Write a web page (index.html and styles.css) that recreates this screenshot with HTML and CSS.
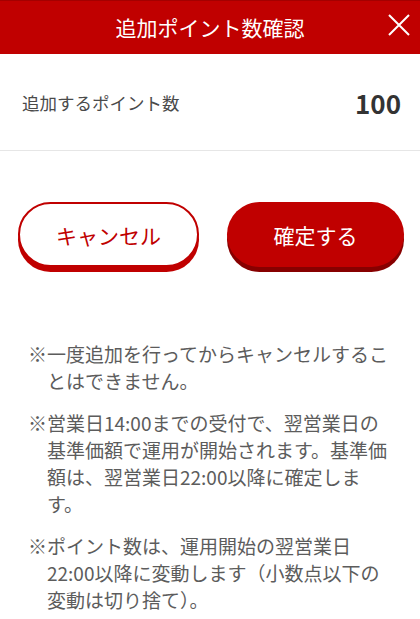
FILE: index.html
```html
<!DOCTYPE html>
<html lang="ja">
<head>
    <meta charset="UTF-8">
    <meta name="viewport" content="width=device-width, initial-scale=1.0">
    <title>追加ポイント数確認</title>
    <link rel="stylesheet" href="styles.css">
</head>
<body>
    <header class="header">
        <h1 class="header-title">追加ポイント数確認</h1>
        <button class="close-btn" aria-label="閉じる">
            <svg width="22" height="22" viewBox="0 0 22 22">
                <path d="M1 1 L21 21 M21 1 L1 21" stroke="#fff" stroke-width="2" fill="none"/>
            </svg>
        </button>
    </header>

    <div class="point-row">
        <span class="point-label">追加するポイント数</span>
        <span class="point-value">100</span>
    </div>

    <div class="actions">
        <button class="btn btn-cancel">キャンセル</button>
        <button class="btn btn-confirm">確定する</button>
    </div>

    <div class="notes">
        <p>※一度追加を行ってからキャンセルすることはできません。</p>
        <p>※営業日14:00までの受付で、翌営業日の基準価額で運用が開始されます。基準価額は、翌営業日22:00以降に確定します。</p>
        <p>※ポイント数は、運用開始の翌営業日22:00以降に変動します（小数点以下の変動は切り捨て）。</p>
    </div>
</body>
</html>
```

FILE: styles.css
```css
body {
    margin: 0;
    font-family: "Noto Sans CJK JP", "Noto Sans", sans-serif;
    background-color: #fff;
    color: #333;
}
.header {
    position: relative;
    height: 54px;
    background-color: #c00000;
    border-top: 1px solid #a30000;
    box-sizing: border-box;
    display: flex;
    align-items: center;
    justify-content: center;
}
.header-title {
    margin: 0;
    font-size: 21px;
    font-weight: normal;
    color: #fff;
    line-height: 1;
}
.close-btn {
    position: absolute;
    right: 10px;
    top: 13px;
    padding: 0;
    border: none;
    background: none;
    width: 22px;
    height: 22px;
    cursor: pointer;
}
.close-btn svg {
    display: block;
}
.point-row {
    height: 96px;
    display: flex;
    align-items: center;
    justify-content: space-between;
    padding: 0 19px 0 22px;
    border-bottom: 1px solid #e6e6e6;
}
.point-label {
    font-size: 17.5px;
    color: #4a4a4a;
}
.point-value {
    font-size: 26px;
    font-weight: bold;
    color: #333;
}
.actions {
    display: flex;
    gap: 28px;
    padding: 0 16px 0 18px;
    margin-top: 51px;
}
.btn {
    flex: 1;
    height: 65px;
    border-radius: 33px;
    font-family: inherit;
    font-size: 21px;
    cursor: pointer;
}
.btn-cancel {
    background-color: #fff;
    color: #c00000;
    border: 2px solid #c00000;
    box-shadow: 0 5px 0 #c00000;
}
.btn-confirm {
    background-color: #c00000;
    color: #fff;
    border: none;
    box-shadow: 0 5px 0 #870000;
}
.notes {
    margin-top: 74px;
    padding: 0 28px;
    color: #5c5c5c;
    font-size: 19px;
    line-height: 26.7px;
}
.notes p {
    margin: 0 0 16px;
    padding-left: 1em;
    text-indent: -1em;
}
```
